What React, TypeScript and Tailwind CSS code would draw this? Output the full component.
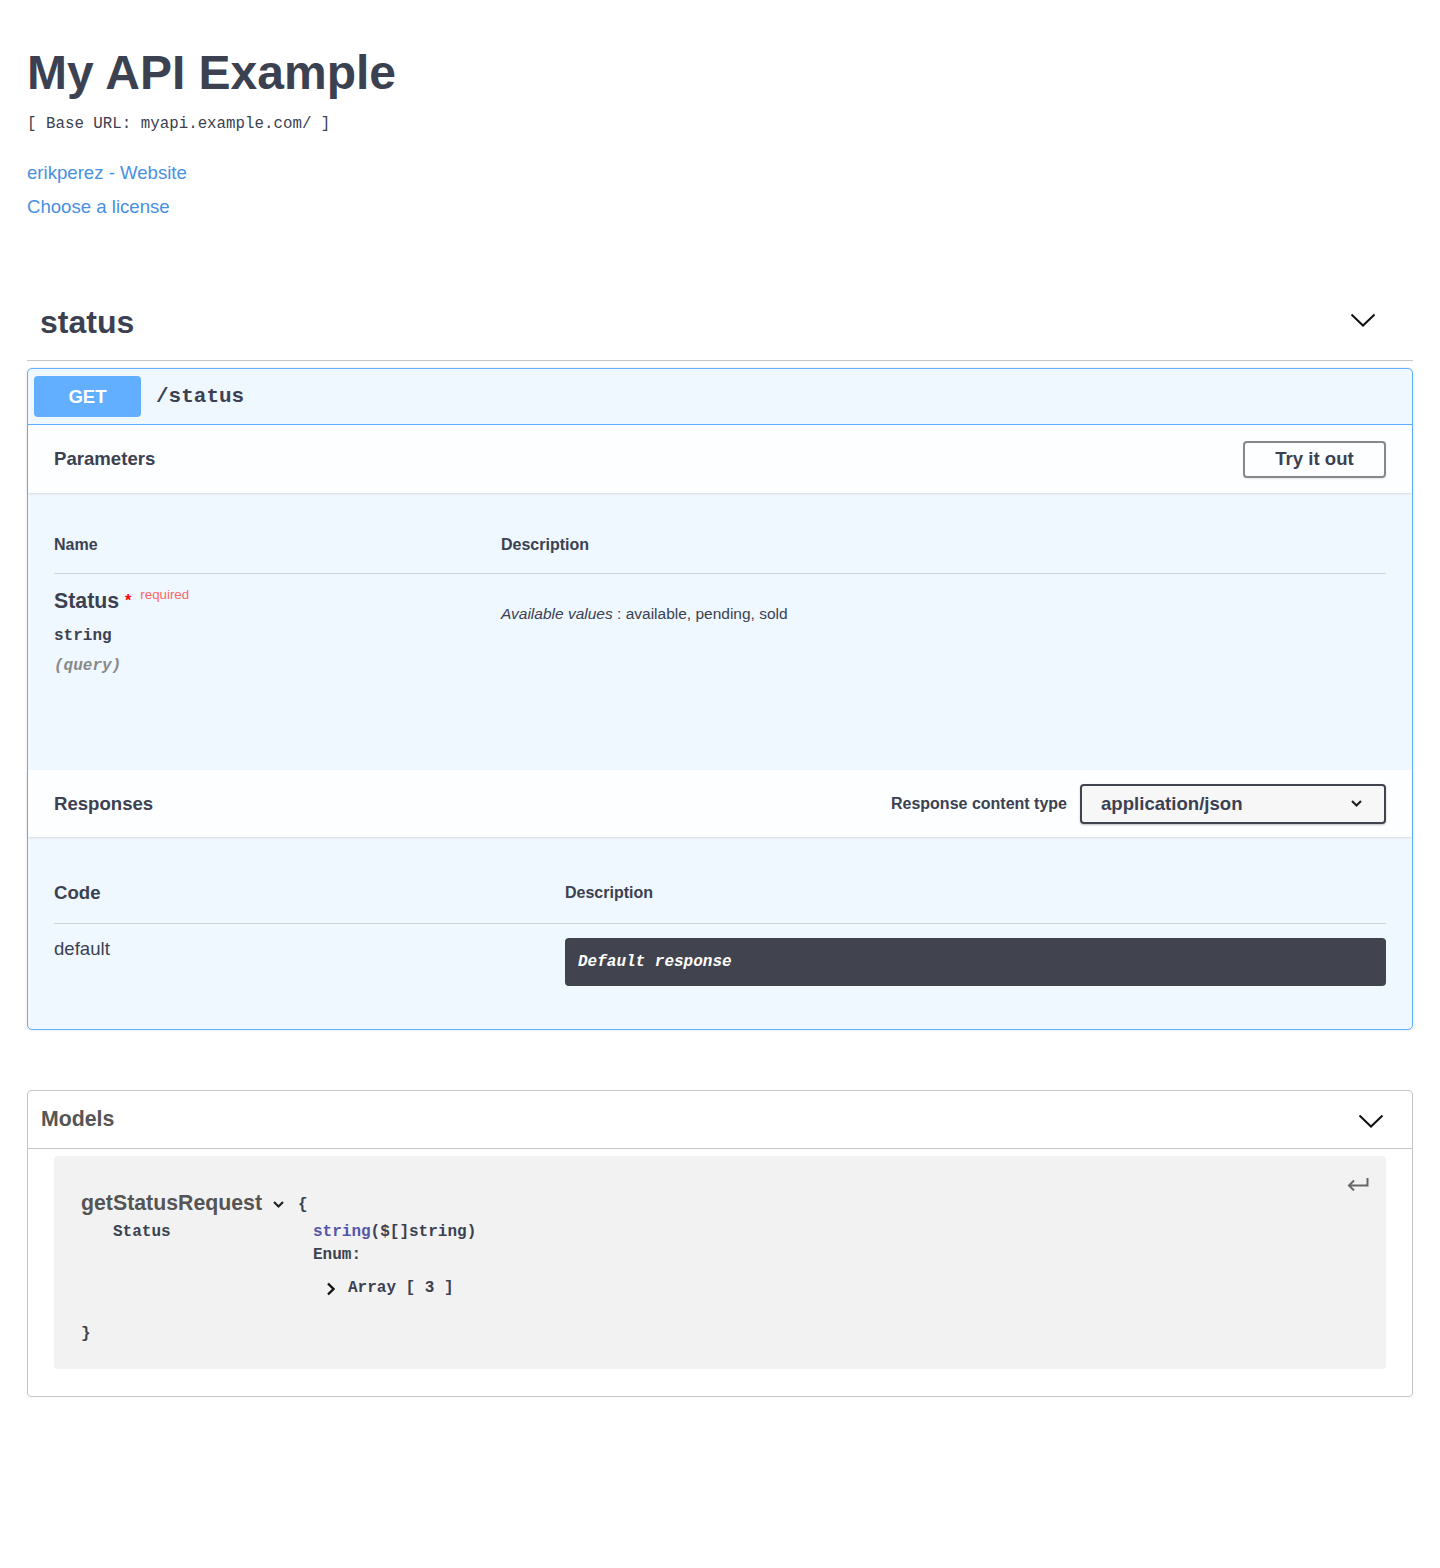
import React from "react";

const sans = "font-['Liberation_Sans',Arial,Helvetica,sans-serif]";
const mono = "font-['Liberation_Mono','Courier_New',Courier,monospace]";

function BigChevron() {
  return (
    <svg width="26" height="14" viewBox="0 0 26 14" fill="none">
      <polyline points="1.5,1.5 13,12.5 24.5,1.5" stroke="#111" strokeWidth="2" />
    </svg>
  );
}

function SmallChevronDown({ className = "" }: { className?: string }) {
  return (
    <svg className={className} width="13" height="9" viewBox="0 0 13 9" fill="none">
      <polyline points="2,2 6.5,6.5 11,2" stroke="#222" strokeWidth="2.2" />
    </svg>
  );
}

function ChevronRight() {
  return (
    <svg width="10" height="14" viewBox="0 0 10 14" fill="none">
      <polyline points="2,1.5 7.5,7 2,12.5" stroke="#111" strokeWidth="2.4" />
    </svg>
  );
}

function ReturnArrow() {
  return (
    <svg width="24" height="14" viewBox="0 0 24 14" fill="none">
      <path d="M21.5 1 V8.5 H3" stroke="#666" strokeWidth="2" />
      <polyline points="8,3.5 3,8.5 8,13.5" stroke="#666" strokeWidth="2" />
    </svg>
  );
}

export default function App() {
  return (
    <div className={`min-h-[1568px] bg-white text-[#3b4151] ${sans}`}>
      <div className="px-[27px]">
        {/* Info */}
        <div>
          <h1 className="mt-[44px] text-[48px] leading-[58px] font-bold">My API Example</h1>
          <div className={`mt-[12px] text-[15.8px] leading-[20px] ${mono}`}>[ Base URL: myapi.example.com/ ]</div>
          <div className="mt-[22px] text-[18.6px] leading-[34px] text-[#4990e2]">
            <div>erikperez - Website</div>
            <div>Choose a license</div>
          </div>
        </div>

        {/* Tag header */}
        <div className="mt-[60px] flex h-[77px] items-center justify-between border-b border-[#c4c6cb] pl-[13px] pr-[37px]">
          <span className="text-[32px] font-bold">status</span>
          <span className="-mt-[4px]">
            <BigChevron />
          </span>
        </div>

        {/* Opblock */}
        <div className="mt-[7px] rounded-[5px] border border-[#61affe] bg-[#eff7ff] shadow-[0_0_3px_rgba(0,0,0,0.12)]">
          <div className="flex h-[56px] items-center gap-[15px] border-b border-[#61affe] px-[6px]">
            <div className="flex h-[41px] w-[107px] items-center justify-center rounded-[4px] bg-[#61affe] text-[18.6px] font-bold text-white">
              GET
            </div>
            <span className={`text-[21px] font-bold ${mono}`}>/status</span>
          </div>

          {/* Parameters header */}
          <div className="flex h-[68px] items-center justify-between bg-[#fcfeff] px-[26px] shadow-[0_1px_2px_rgba(0,0,0,0.1)]">
            <span className="text-[18.6px] font-bold">Parameters</span>
            <button className="flex h-[37px] w-[143px] items-center justify-center rounded-[4px] border-2 border-[#888] bg-transparent text-[18.6px] font-bold text-[#3b4151] shadow-[0_1px_2px_rgba(0,0,0,0.1)]">
              Try it out
            </button>
          </div>

          {/* Parameters table */}
          <div className="h-[277px] px-[26px]">
            <div className="flex border-b border-[#cbd3dc] pt-[37px] pb-[13px] text-[16px] font-bold leading-[30px]">
              <div className="w-[447px]">Name</div>
              <div>Description</div>
            </div>
            <div className="flex">
              <div className="w-[447px] pt-[13px]">
                <div className="flex items-start leading-[28px]">
                  <span className="text-[21.3px] font-bold">Status</span>
                  <span className="ml-[6px] text-[16px] font-bold text-[#ff0000]">*</span>
                  <span className="ml-[9px] -mt-[6px] text-[13.3px] text-[#fc6767]">required</span>
                </div>
                <div className={`mt-[11px] text-[16px] font-bold leading-[20px] ${mono}`}>string</div>
                <div className={`mt-[10px] text-[16px] font-bold italic leading-[20px] text-[#888] ${mono}`}>(query)</div>
              </div>
              <div className="pt-[29px] text-[15.5px] leading-[22px]">
                <i>Available values</i> : available, pending, sold
              </div>
            </div>
          </div>

          {/* Responses header */}
          <div className="flex h-[67px] items-center justify-between bg-[#fcfeff] px-[26px] shadow-[0_1px_2px_rgba(0,0,0,0.1)]">
            <span className="text-[18.6px] font-bold">Responses</span>
            <div className="flex items-center gap-[13px]">
              <span className="text-[16px] font-bold">Response content type</span>
              <div className="flex h-[40px] w-[306px] items-center justify-between rounded-[4px] border-2 border-[#41444e] bg-[#f7f7f7] pl-[19px] pr-[21px] shadow-[0_1px_2px_rgba(0,0,0,0.25)]">
                <span className="text-[18.6px] font-bold">application/json</span>
                <SmallChevronDown />
              </div>
            </div>
          </div>

          {/* Responses table */}
          <div className="h-[192px] px-[26px]">
            <div className="flex items-end border-b border-[#cbd3dc] pt-[41px] pb-[15px] leading-[30px]">
              <div className="w-[511px] text-[18.6px] font-bold">Code</div>
              <div className="text-[16px] font-bold">Description</div>
            </div>
            <div className="flex pt-[14px]">
              <div className="w-[511px] text-[18.6px] leading-[22px]">default</div>
              <div className="flex h-[48px] flex-1 items-center rounded-[4px] bg-[#41444e] px-[13px]">
                <span className={`text-[16px] font-bold italic text-white ${mono}`}>Default response</span>
              </div>
            </div>
          </div>
        </div>

        {/* Models */}
        <div className="mt-[60px] rounded-[4px] border border-[#c4c6cb]">
          <div className="flex h-[58px] items-center justify-between border-b border-[#c4c6cb] pl-[13px] pr-[28px]">
            <span className="text-[21.3px] font-bold text-[#555]">Models</span>
            <span className="mt-[3px]">
              <BigChevron />
            </span>
          </div>
          <div className="px-[26px] pt-[7px] pb-[27px]">
            <div className="relative h-[213px] rounded-[4px] bg-[#f2f2f2] pl-[27px] pt-[30px]">
              <span className="absolute right-[16px] top-[21px]">
                <ReturnArrow />
              </span>
              <div className="flex items-center leading-[28px]">
                <span className="text-[21.3px] font-bold text-[#555]">getStatusRequest</span>
                <SmallChevronDown className="ml-[10px] mt-[3px]" />
                <span className={`ml-[13px] mt-[5px] text-[16px] font-bold ${mono}`}>{"{"}</span>
              </div>
              <div className={`mt-[2px] flex text-[16px] font-bold leading-[23px] ${mono}`}>
                <div className="w-[232px] pl-[32px]">Status</div>
                <div>
                  <div>
                    <span className="text-[#55a]">string</span>($[]string)
                  </div>
                  <div>Enum:</div>
                  <div className="mt-[10px] flex items-center pl-[13px]">
                    <ChevronRight />
                    <span className="ml-[12px]">Array [ 3 ]</span>
                  </div>
                </div>
              </div>
              <div className={`mt-[23px] text-[16px] font-bold leading-[23px] ${mono}`}>{"}"}</div>
            </div>
          </div>
        </div>
      </div>
    </div>
  );
}
